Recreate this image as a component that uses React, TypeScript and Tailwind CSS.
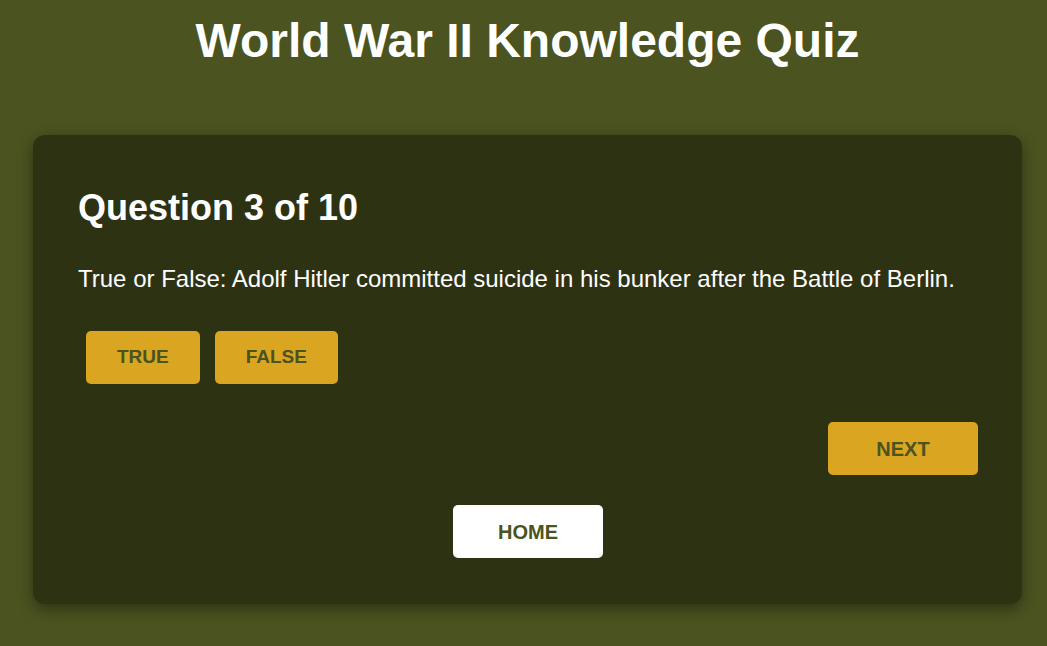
import React from 'react'

const font = { fontFamily: '"Liberation Sans", Arial, sans-serif' }

const App = () => {
  return (
    <div className="min-h-[646px] bg-[#4b5320] text-white pt-[13px] pl-[33px] pr-[25px] pb-[42px]" style={font}>
      <h1 className="text-center text-[48px] font-bold leading-[55px]">World War II Knowledge Quiz</h1>

      <div className="mt-[67px] bg-[#2d3213] rounded-[12px] shadow-[0_5px_15px_rgba(0,0,0,0.4)] pl-[45px] pr-[44px] pt-[52px] pb-[46px]">
        <h2 className="text-[36px] font-bold leading-[41px]">Question 3 of 10</h2>

        <p className="mt-[37px] text-[24px] leading-[27px]">
          True or False: Adolf Hitler committed suicide in his bunker after the Battle of Berlin.
        </p>

        <div className="mt-[39px] ml-[8px] flex gap-[15px]">
          <button className="h-[53px] px-[31px] rounded-[5px] bg-[#daa520] text-[#4b5320] text-[19px] font-bold">TRUE</button>
          <button className="h-[53px] px-[31px] rounded-[5px] bg-[#daa520] text-[#4b5320] text-[19px] font-bold">FALSE</button>
        </div>

        <div className="mt-[38px] flex justify-end">
          <button className="h-[53px] w-[150px] rounded-[5px] bg-[#daa520] text-[#4b5320] text-[20px] font-bold">NEXT</button>
        </div>

        <div className="mt-[30px] flex justify-center">
          <button className="h-[53px] w-[150px] rounded-[5px] bg-white text-[#4b5320] text-[20px] font-bold">HOME</button>
        </div>
      </div>
    </div>
  )
}

export default App
